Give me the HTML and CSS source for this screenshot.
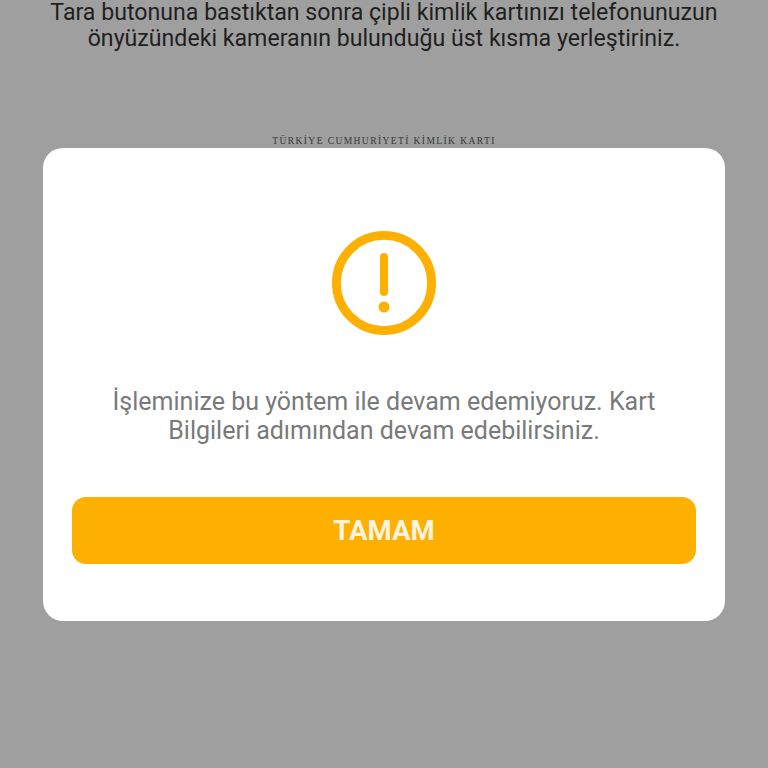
FILE: index.html
```html
<!DOCTYPE html>
<html lang="tr">
<head>
<meta charset="utf-8">
<title>Kimlik doğrulama</title>
<link rel="stylesheet" href="styles.css">
</head>
<body>
<main class="screen">
  <p class="instructions">Tara butonuna bastıktan sonra çipli kimlik kartınızı telefonunuzun önyüzündeki kameranın bulunduğu üst kısma yerleştiriniz.</p>
  <p class="card-title">TÜRKİYE CUMHURİYETİ KİMLİK KARTI</p>
</main>
<div class="overlay">
  <section class="dialog">
    <svg class="alert-icon" viewBox="0 0 104 104" aria-hidden="true">
      <circle class="alert-ring" cx="52" cy="52" r="47.6"/>
      <line class="alert-bar" x1="52" y1="26" x2="52" y2="61"/>
      <circle class="alert-dot" cx="52" cy="76" r="5.5"/>
    </svg>
    <p class="message">İşleminize bu yöntem ile devam edemiyoruz. Kart Bilgileri adımından devam edebilirsiniz.</p>
    <button class="confirm" type="button">TAMAM</button>
  </section>
</div>
</body>
</html>
```
FILE: styles.css
```css
* { box-sizing: border-box; }
html, body { margin: 0; height: 100%; }
body {
  background: #9f9f9f;
  font-family: Roboto, "Liberation Sans", sans-serif;
  overflow: hidden;
}
.screen {
  display: flex;
  flex-direction: column;
  align-items: center;
}
.instructions {
  margin: 0;
  width: 700px;
  text-align: center;
  font-size: 23.15px;
  line-height: 26px;
  color: #1f1f1f;
}
.card-title {
  margin: 83px 0 0;
  font-family: "Liberation Serif", serif;
  font-size: 9.5px;
  line-height: 12px;
  letter-spacing: 1.42px;
  color: #333838;
  white-space: nowrap;
}
.overlay {
  position: fixed;
  inset: 0;
  display: flex;
  align-items: center;
  justify-content: center;
}
.dialog {
  width: 682px;
  height: 473px;
  padding: 83px 29px 0;
  display: flex;
  flex-direction: column;
  align-items: center;
  background: #fff;
  border-radius: 20px;
}
.alert-icon { width: 104px; height: 104px; flex: none; }
.alert-ring { fill: none; stroke: #fdb000; stroke-width: 8.8; }
.alert-bar { stroke: #fdb000; stroke-width: 8; stroke-linecap: round; }
.alert-dot { fill: #fdb000; }
.message {
  margin: 52px 0 0;
  width: 600px;
  text-align: center;
  font-size: 25px;
  line-height: 29px;
  color: #787a7a;
}
.confirm {
  margin-top: 52px;
  width: 100%;
  height: 67px;
  border: 0;
  border-radius: 14px;
  background: #fdb000;
  color: #fff3e0;
  font: 700 27.6px Roboto, "Liberation Sans", sans-serif;
}
```
